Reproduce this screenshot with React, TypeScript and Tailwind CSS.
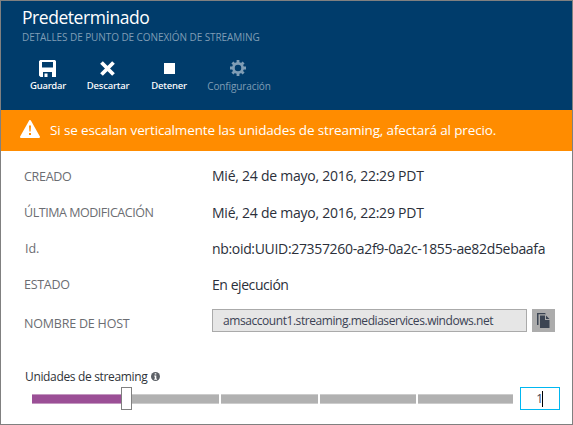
import type { ReactNode } from "react";

function Command({ label, className, children }: { label: string; className: string; children: ReactNode }) {
  return (
    <button className={`flex h-[37px] flex-col items-center ${className}`}>
      <span className="flex h-[20px] items-center justify-center">{children}</span>
      <span className="mt-[1px] whitespace-nowrap leading-[14px]">{label}</span>
    </button>
  );
}

function Row({ label, labelClass, value, valueClass, className }: { label: string; labelClass: string; value: string; valueClass: string; className: string }) {
  return (
    <div className={`flex items-center ${className}`}>
      <div className="w-[188px] shrink-0 text-[#6b6d72]">
        <span className={`relative -top-px whitespace-nowrap text-[12.5px] ${labelClass}`}>{label}</span>
      </div>
      <span className={`whitespace-nowrap text-[14px] text-[#2b2f3a] ${valueClass}`}>{value}</span>
    </div>
  );
}

export default function App() {
  return (
    <div className="flex h-[425px] w-[573px] flex-col overflow-hidden border border-[#808080] bg-white font-['Open_Sans',sans-serif]">
      <header className="h-[109px] shrink-0 bg-[#003c6b] pl-[21px] pt-[4px] text-white">
        <h1 className="text-[17.5px] leading-6 tracking-[-0.45px]">Predeterminado</h1>
        <p className="mt-px text-[10px] leading-[14px] tracking-[-0.08px] text-[#7f9db5]">DETALLES DE PUNTO DE CONEXIÓN DE STREAMING</p>
        <div className="mt-[14px] flex">
          <Command label="Guardar" className="w-[52px] font-['Noto_Sans',sans-serif] text-[9.5px] font-medium tracking-[-0.2px]">
            <svg className="-ml-px" width="17" height="17" viewBox="0 0 17 17" fill="currentColor">
              <path fillRule="evenodd" d="M1.2 0H16L17 1.2V17H13V12H4V17H1.5L0 15.5V1.2ZM3 2V7.5H14V2ZM5.5 13.5H8.5V17H5.5Z" />
            </svg>
          </Command>
          <Command label="Descartar" className="ml-[4px] w-[60px] font-['Noto_Sans',sans-serif] text-[9.5px] font-medium tracking-[-0.2px]">
            <svg className="-ml-px" width="15" height="15" viewBox="0 0 15 15" stroke="currentColor" strokeWidth="3.8">
              <path d="M1.5 1.5L13.5 13.5M13.5 1.5L1.5 13.5" />
            </svg>
          </Command>
          <Command label="Detener" className="ml-[6px] w-[50px] font-['Noto_Sans',sans-serif] text-[9.5px] font-medium tracking-[-0.2px]">
            <span className="mt-px size-[11px] bg-white" />
          </Command>
          <Command label="Configuración" className="ml-[10px] w-[70px] text-[10px] tracking-[-0.12px] text-[#7f9db5]">
            <svg className="-ml-[2px] -mt-px" width="16" height="16" viewBox="0 0 16 16" fill="none" stroke="currentColor">
              <circle cx="8" cy="8" r="4.6" strokeWidth="2.7" />
              <path d="M8 0V3M8 13V16M0 8H3M13 8H16M2.4 2.4L4.5 4.5M11.5 11.5L13.6 13.6M13.6 2.4L11.5 4.5M4.5 11.5L2.4 13.6" strokeWidth="2.8" />
            </svg>
          </Command>
        </div>
      </header>

      <div className="flex h-[41px] shrink-0 items-center bg-[#ff8c00] pl-[19px] text-white">
        <svg className="-mt-[3px]" width="20" height="18" viewBox="0 0 20 18">
          <path d="M10 1L19 17H1Z" fill="white" stroke="white" strokeWidth="2" strokeLinejoin="round" />
          <path d="M9 5.5H11L10.6 11.5H9.4ZM9 13H11V15H9Z" fill="#ff8c00" />
        </svg>
        <span className="ml-[10px] whitespace-nowrap text-[13.5px] tracking-[-0.14px]">Si se escalan verticalmente las unidades de streaming, afectará al precio.</span>
      </div>

      <main className="flex flex-col pl-[23px] pt-[6px]">
        <Row label="CREADO" labelClass="tracking-[-0.3px]" value="Mié, 24 de mayo, 2016, 22:29 PDT" valueClass="tracking-[-0.24px]" className="h-[37px]" />
        <Row label="ÚLTIMA MODIFICACIÓN" labelClass="tracking-[-0.46px]" value="Mié, 24 de mayo, 2016, 22:29 PDT" valueClass="tracking-[-0.24px]" className="h-[36px]" />
        <Row label="Id." labelClass="tracking-[-0.1px] pl-px" value="nb:oid:UUID:27357260-a2f9-0a2c-1855-ae82d5ebaafa" valueClass="tracking-[-0.33px]" className="h-[36px]" />
        <Row label="ESTADO" labelClass="tracking-[-0.3px]" value="En ejecución" valueClass="tracking-[-0.44px]" className="h-[36px]" />
        <div className="mt-[7px] flex h-[23px] items-center">
          <div className="w-[188px] shrink-0 text-[#6b6d72]">
            <span className="relative top-px whitespace-nowrap text-[12.5px] tracking-[-0.2px]">NOMBRE DE HOST</span>
          </div>
          <div className="flex h-[23px] w-[315px] items-center border border-[#aaaaaa] bg-[#e6e6e6] pl-[10px] text-[12px] text-[#3b4254]">
            <span className="whitespace-nowrap tracking-[-0.44px]">amsaccount1.streaming.mediaservices.windows.net</span>
          </div>
          <button className="ml-[5px] flex size-[23px] items-center justify-center bg-[#acacac]">
            <svg className="-mt-px" width="13" height="15" viewBox="0 0 13 15" fill="#3b4452">
              <path d="M0 0H8L9 1.3H1.5V12H0Z" />
              <path d="M3 2.5H8V7H12.5V15H3ZM9 2.5L12.5 6H9Z" />
            </svg>
          </button>
        </div>
      </main>

      <section className="mt-[36px] pl-[24px]">
        <div className="flex h-[18px] items-center">
          <span className="whitespace-nowrap text-[12px] tracking-[-0.34px] text-[#2f3339]">Unidades de streaming</span>
          <svg className="-mt-px ml-[4px]" width="9" height="9" viewBox="0 0 9 9">
            <circle cx="4.5" cy="4.5" r="4.5" fill="#5c6066" />
            <path d="M3.7 1.2H5.3V2.6H3.7ZM3.2 3.5H5.3V6.7H6V7.7H3.2V6.7H3.8V4.4H3.2Z" fill="white" />
          </svg>
        </div>
        <div className="mt-px flex h-[23px] items-center pl-[7px]">
          <div className="h-[10px] w-[89px] border-y border-[#c398c0] bg-[#9b4f96]" />
          <div className="h-[23px] w-[11px] border border-[#808080] bg-white" />
          <div className="h-[10px] w-[87px] border-y border-[#cccccc] bg-[#b1b1b1]" />
          <div className="ml-[2px] h-[10px] w-[97px] border-y border-[#cccccc] bg-[#b1b1b1]" />
          <div className="ml-[2px] h-[10px] w-[96px] border-y border-[#cccccc] bg-[#b1b1b1]" />
          <div className="ml-[2px] h-[10px] w-[95px] border-y border-[#cccccc] bg-[#b1b1b1]" />
          <div className="ml-[7px] flex h-[23px] w-[40px] items-center justify-end border border-[#00b7f1] pr-[16px]">
            <span className="text-[12px] text-[#3b4254]">1</span>
            <span className="-ml-px h-[16px] w-px bg-black" />
          </div>
        </div>
      </section>
    </div>
  );
}
